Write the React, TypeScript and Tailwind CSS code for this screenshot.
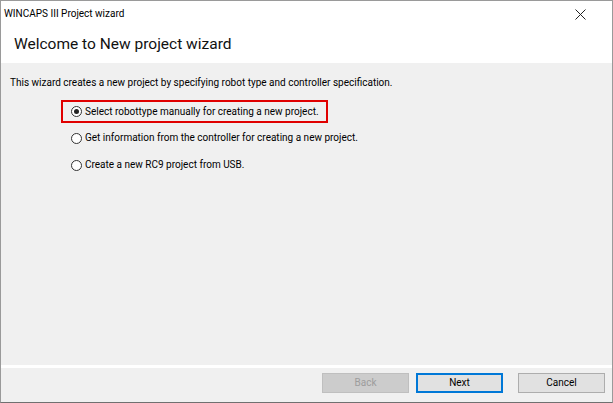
import React from "react";

function Radio({ checked }: { checked?: boolean }) {
  return (
    <span className="w-[11px] h-[11px] rounded-full border border-[#333] bg-white flex items-center justify-center shrink-0">
      {checked && <span className="w-[5px] h-[5px] rounded-full bg-[#222]" />}
    </span>
  );
}

export default function App() {
  const font = { fontFamily: 'Roboto, "Liberation Sans", Arial, sans-serif' };
  return (
    <div className="w-[613px] h-[403px] bg-white flex flex-col border border-[#9a9a9a] border-b-[#707070] text-black overflow-hidden" style={font}>
      <div className="h-[24px] flex items-center justify-between pl-[3px] pr-[26px] shrink-0">
        <span className="text-[10px] leading-none mt-[2px]">WINCAPS III Project wizard</span>
        <svg width="11" height="11" viewBox="0 0 11 11" className="mt-[2px]">
          <path d="M0.5 0.5 L10.5 10.5 M10.5 0.5 L0.5 10.5" stroke="#222" strokeWidth="1" />
        </svg>
      </div>
      <div className="h-[38px] flex items-center pl-[13px] shrink-0">
        <span className="text-[15.5px] leading-none text-[#111] mt-[1px]">Welcome to New project wizard</span>
      </div>
      <div className="flex-1 bg-[#f0f0f0] flex flex-col">
        <div className="flex-1 flex flex-col pl-[9px] pt-[15px]">
          <p className="text-[10px] leading-none">This wizard creates a new project by specifying robot type and controller specification.</p>
          <div className="flex flex-col pl-[51px] mt-[12px]">
            <div className="w-[267px] h-[23px] border-2 border-[#e00000] flex items-center gap-[3px] pl-[8px]">
              <Radio checked />
              <span className="text-[10px] leading-none">Select robottype manually for creating a new project.</span>
            </div>
            <div className="h-[28px] flex items-center gap-[3px] pl-[10px] mt-[1px]">
              <Radio />
              <span className="text-[10px] leading-none">Get information from the controller for creating a new project.</span>
            </div>
            <div className="h-[26px] flex items-center gap-[3px] pl-[10px]">
              <Radio />
              <span className="text-[10px] leading-none">Create a new RC9 project from USB.</span>
            </div>
          </div>
        </div>
        <div className="h-[3px] bg-white shrink-0" />
        <div className="h-[34px] flex items-start justify-end gap-[7px] pr-[7px] pt-[5px] shrink-0">
          <button className="w-[87px] h-[20px] bg-[#cccccc] border border-[#bfbfbf] text-[10px] text-[#9d9d9d] leading-none">Back</button>
          <button className="w-[87px] h-[20px] bg-[#e1e1e1] border-2 border-[#0078d7] text-[10px] leading-none mr-[8px]">Next</button>
          <button className="w-[87px] h-[20px] bg-[#e1e1e1] border border-[#adadad] text-[10px] leading-none">Cancel</button>
        </div>
      </div>
    </div>
  );
}
